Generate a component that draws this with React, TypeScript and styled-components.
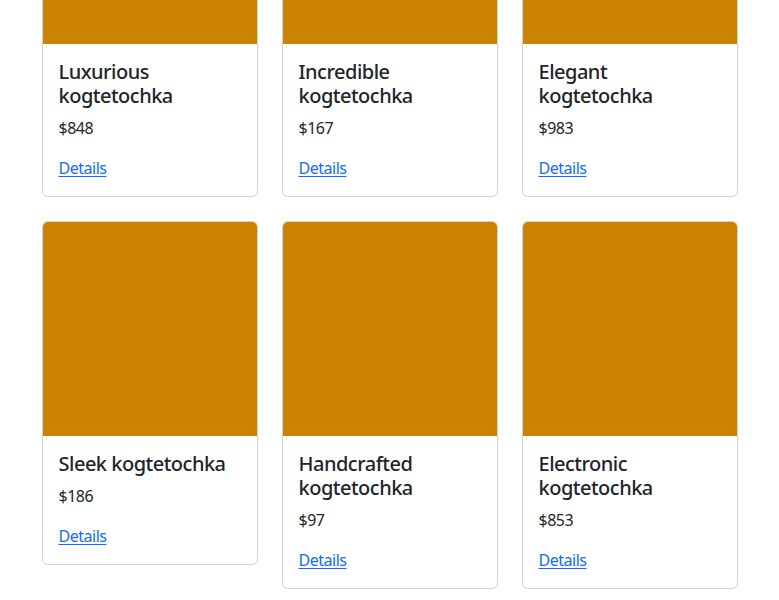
import React from "react";
import styled, { createGlobalStyle } from "styled-components";

const GlobalStyle = createGlobalStyle`
  html, body { margin: 0; padding: 0; background: #fff; }
  body {
    font-family: "Noto Sans", "Liberation Sans", sans-serif;
    font-size: 16px;
    line-height: 1.5;
    color: #212529;
    letter-spacing: -0.03em;
    overflow: hidden;
  }
  * { box-sizing: border-box; }
`;

const Container = styled.div`
  width: 720px;
  margin: -171px auto 0;
`;

const Grid = styled.div`
  display: grid;
  grid-template-columns: repeat(3, 216px);
  column-gap: 24px;
  row-gap: 24px;
  padding: 0 12px;
  align-items: start;
`;

const Card = styled.div`
  display: flex;
  flex-direction: column;
  border: 1px solid rgba(0, 0, 0, 0.175);
  border-radius: 6px;
  overflow: hidden;
  background: #fff;
`;

const Image = styled.div`
  height: 214px;
  background: #cc8400;
`;

const Body = styled.div`
  padding: 16px;
`;

const Title = styled.h5`
  margin: 0 0 8px;
  font-size: 20px;
  font-weight: 500;
  line-height: 1.2;
  letter-spacing: -0.025em;
`;

const Price = styled.p`
  margin: 0 0 16px;
`;

const Link = styled.a`
  color: #0d6efd;
  text-decoration: underline;
  text-underline-offset: 2px;
`;

const items = [
  { name: "Luxurious kogtetochka", price: 848 },
  { name: "Incredible kogtetochka", price: 167 },
  { name: "Elegant kogtetochka", price: 983 },
  { name: "Sleek kogtetochka", price: 186 },
  { name: "Handcrafted kogtetochka", price: 97 },
  { name: "Electronic kogtetochka", price: 853 },
];

export default function App() {
  return (
    <>
      <GlobalStyle />
      <Container>
        <Grid>
          {items.map((it) => (
            <Card key={it.name}>
              <Image />
              <Body>
                <Title>{it.name}</Title>
                <Price>${it.price}</Price>
                <Link href="#">Details</Link>
              </Body>
            </Card>
          ))}
        </Grid>
      </Container>
    </>
  );
}
